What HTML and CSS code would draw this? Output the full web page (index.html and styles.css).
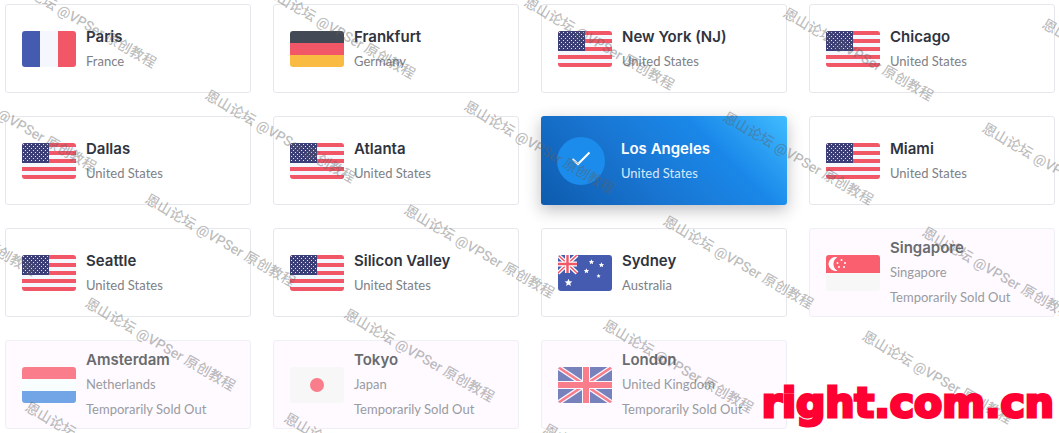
FILE: index.html
```html
<!DOCTYPE html>
<html lang="en">
<head>
<meta charset="utf-8">
<meta name="viewport" content="width=device-width, initial-scale=1">
<title>Server locations</title>
<link rel="stylesheet" href="styles.css">
</head>
<body>
<svg class="defs" aria-hidden="true">
  <defs>
    <pattern id="stars" width="4" height="4" patternUnits="userSpaceOnUse">
      <rect x="1" y="1" width="1" height="1" fill="#e4e5f2"/>
      <rect x="3" y="3" width="1" height="1" fill="#e4e5f2"/>
    </pattern>
    <symbol id="us" viewBox="0 0 54 36">
      <path fill="#f5f7ff" d="M0 0h54v36H0z"/>
      <path stroke="#f25767" stroke-width="4" d="M0 2h54M0 10h54M0 18h54M0 26h54M0 34h54"/>
      <path fill="#3c3f77" d="M0 0h27v20H0z"/>
      <path fill="url(#stars)" d="M0 0h26v19H0z"/>
    </symbol>
    <symbol id="fr" viewBox="0 0 54 36">
      <path fill="#455bb0" d="M0 0h18v36H0z"/><path fill="#f5f7ff" d="M18 0h18v36H18z"/><path fill="#f25767" d="M36 0h18v36H36z"/>
    </symbol>
    <symbol id="de" viewBox="0 0 54 36">
      <path fill="#444a55" d="M0 0h54v12H0z"/><path fill="#f25767" d="M0 12h54v12H0z"/><path fill="#f9bb42" d="M0 24h54v12H0z"/>
    </symbol>
    <symbol id="nl" viewBox="0 0 54 36">
      <path fill="#f97d8b" d="M0 0h54v12H0z"/><path fill="#f8feff" d="M0 12h54v12H0z"/><path fill="#72a5e6" d="M0 24h54v12H0z"/>
    </symbol>
    <symbol id="jp" viewBox="0 0 54 36">
      <path fill="#f7f7f7" d="M0 0h54v36H0z"/><circle cx="27" cy="18" r="7" fill="#f97d8b"/>
    </symbol>
    <symbol id="sg" viewBox="0 0 54 36">
      <path fill="#f7f7f7" d="M0 0h54v36H0z"/><path fill="#f95f6e" d="M0 0h54v18H0z"/>
      <path fill="#fff" d="M11.500 2.300A7 7 0 1 0 11.500 15.700A7.600 7.600 0 0 1 11.500 2.300z"/>
      <g fill="#fff"><circle cx="15.500" cy="5" r="1"/><circle cx="11.500" cy="8" r="1"/><circle cx="19" cy="8" r="1"/><circle cx="13" cy="12" r="1"/><circle cx="18" cy="12" r="1"/></g>
    </symbol>
    <symbol id="au" viewBox="0 0 54 36">
      <path fill="#455bb0" d="M0 0h54v36H0z"/>
      <path stroke="#fff" stroke-width="4" d="M0 0l19 18M19 0L0 18"/>
      <path stroke="#f25767" stroke-width="1.500" d="M0 0l19 18M19 0L0 18"/>
      <path stroke="#fff" stroke-width="5" d="M9.500 0v18M0 9h19"/>
      <path stroke="#f25767" stroke-width="2.400" d="M9.500 0v18M0 9h19"/>
      <path id="star" fill="#fff" d="M10.500 23.700l1.100 2.500 2.700.3-2 1.800.6 2.700-2.400-1.400-2.400 1.400.6-2.700-2-1.800 2.700-.3z"/>
      <use href="#star" transform="translate(26.100 -12.400) scale(.7)"/>
      <use href="#star" transform="translate(36.100 -9.400) scale(.7)"/>
      <use href="#star" transform="translate(21.100 -3.400) scale(.7)"/>
      <use href="#star" transform="translate(34.800 5.800) scale(.55)"/>
    </symbol>
    <symbol id="gb" viewBox="0 0 54 36">
      <path fill="#7782bd" d="M0 0h54v36H0z"/>
      <path stroke="#faf8ff" stroke-width="5" d="M0 0l54 36M54 0L0 36"/>
      <path stroke="#f97d8b" stroke-width="2.500" d="M0 0l54 36M54 0L0 36"/>
      <path stroke="#faf8ff" stroke-width="8" d="M28 0v36M0 18h54"/>
      <path stroke="#f97d8b" stroke-width="6" d="M28 0v36M0 18h54"/>
    </symbol>
    <text id="mark" class="mark" transform="rotate(30)">恩山论坛 @VPSer 原创教程</text>
  </defs>
</svg>

<form class="locations">
  <label class="card"><input class="pick" type="radio" name="location"><svg class="flag" aria-hidden="true"><use href="#fr"/></svg><span class="text"><span class="city">Paris</span><span class="country">France</span></span></label>
  <label class="card"><input class="pick" type="radio" name="location"><svg class="flag" aria-hidden="true"><use href="#de"/></svg><span class="text"><span class="city">Frankfurt</span><span class="country">Germany</span></span></label>
  <label class="card"><input class="pick" type="radio" name="location"><svg class="flag" aria-hidden="true"><use href="#us"/></svg><span class="text"><span class="city">New York (NJ)</span><span class="country">United States</span></span></label>
  <label class="card"><input class="pick" type="radio" name="location"><svg class="flag" aria-hidden="true"><use href="#us"/></svg><span class="text"><span class="city">Chicago</span><span class="country">United States</span></span></label>
  <label class="card"><input class="pick" type="radio" name="location"><svg class="flag" aria-hidden="true"><use href="#us"/></svg><span class="text"><span class="city">Dallas</span><span class="country">United States</span></span></label>
  <label class="card"><input class="pick" type="radio" name="location"><svg class="flag" aria-hidden="true"><use href="#us"/></svg><span class="text"><span class="city">Atlanta</span><span class="country">United States</span></span></label>
  <label class="card selected"><input class="pick" type="radio" name="location" checked><svg class="check" viewBox="0 0 48 48" aria-hidden="true"><circle cx="24" cy="24" r="24" fill="#1b8ceb"/><path d="M15.500 22l5.500 5 11.500-11.500" fill="none" stroke="#fff" stroke-width="2"/></svg><span class="text"><span class="city">Los Angeles</span><span class="country">United States</span></span></label>
  <label class="card"><input class="pick" type="radio" name="location"><svg class="flag" aria-hidden="true"><use href="#us"/></svg><span class="text"><span class="city">Miami</span><span class="country">United States</span></span></label>
  <label class="card"><input class="pick" type="radio" name="location"><svg class="flag" aria-hidden="true"><use href="#us"/></svg><span class="text"><span class="city">Seattle</span><span class="country">United States</span></span></label>
  <label class="card"><input class="pick" type="radio" name="location"><svg class="flag" aria-hidden="true"><use href="#us"/></svg><span class="text"><span class="city">Silicon Valley</span><span class="country">United States</span></span></label>
  <label class="card"><input class="pick" type="radio" name="location"><svg class="flag" aria-hidden="true"><use href="#au"/></svg><span class="text"><span class="city">Sydney</span><span class="country">Australia</span></span></label>
  <label class="card sold-out"><input class="pick" type="radio" name="location" disabled><svg class="flag" aria-hidden="true"><use href="#sg"/></svg><span class="text"><span class="city">Singapore</span><span class="country">Singapore</span><span class="country note">Temporarily Sold Out</span></span></label>
  <label class="card sold-out"><input class="pick" type="radio" name="location" disabled><svg class="flag" aria-hidden="true"><use href="#nl"/></svg><span class="text"><span class="city">Amsterdam</span><span class="country">Netherlands</span><span class="country note">Temporarily Sold Out</span></span></label>
  <label class="card sold-out"><input class="pick" type="radio" name="location" disabled><svg class="flag" aria-hidden="true"><use href="#jp"/></svg><span class="text"><span class="city">Tokyo</span><span class="country">Japan</span><span class="country note">Temporarily Sold Out</span></span></label>
  <label class="card sold-out"><input class="pick" type="radio" name="location" disabled><svg class="flag" aria-hidden="true"><use href="#gb"/></svg><span class="text"><span class="city">London</span><span class="country">United Kingdom</span><span class="country note">Temporarily Sold Out</span></span></label>
</form>

<svg class="watermark" aria-hidden="true">
  <use href="#mark" x="5" y="-17"/><use href="#mark" x="264" y="-6"/><use href="#mark" x="523" y="5"/><use href="#mark" x="782" y="16"/><use href="#mark" x="1041" y="27"/>
  <use href="#mark" x="-55" y="87"/><use href="#mark" x="204" y="98"/><use href="#mark" x="463" y="109"/><use href="#mark" x="722" y="120"/><use href="#mark" x="981" y="131"/>
  <use href="#mark" x="-115" y="191"/><use href="#mark" x="144" y="202"/><use href="#mark" x="403" y="213"/><use href="#mark" x="662" y="224"/><use href="#mark" x="921" y="235"/>
  <use href="#mark" x="84" y="306"/><use href="#mark" x="343" y="317"/><use href="#mark" x="602" y="328"/><use href="#mark" x="861" y="339"/>
  <use href="#mark" x="24" y="410"/><use href="#mark" x="283" y="421"/><use href="#mark" x="542" y="432"/>
</svg>
<div class="site">right.com.cn</div>
</body>
</html>
```
FILE: styles.css
```css
* { box-sizing: border-box; }
body {
  position: relative;
  margin: 0;
  background: #fff;
  font-family: Lato, "Open Sans", sans-serif;
}
.defs { position: absolute; width: 0; height: 0; }
.locations {
  display: grid;
  grid-template-columns: repeat(4, 1fr);
  gap: 23px 22px;
  padding: 4px 4px 4px 5px;
}
.card {
  position: relative;
  display: flex;
  align-items: center;
  gap: 10px;
  min-height: 89px;
  padding: 0 16px;
  border: 1px solid #e6e7ed;
  border-radius: 3px;
  cursor: pointer;
}
.pick { position: absolute; opacity: 0; margin: 0; }
.flag { flex: none; width: 54px; height: 36px; border-radius: 3px; }
.text { display: flex; flex-direction: column; padding-bottom: 1px; }
.city { color: #2f343e; font: 600 15px/26px Inter, sans-serif; }
.country { color: #7e8085; font-size: 13px; line-height: 23px; }
.note { line-height: 26px; }
.selected {
  gap: 16px;
  border: 0;
  background: linear-gradient(45deg, #0d5bae, #1976d2 40%, #1a88e9 70%, #40bcff);
  box-shadow: 0 5px 16px rgba(40, 35, 50, .3);
}
.selected .city { color: #fff; }
.selected .country { color: #d6e9fb; }
.check { flex: none; width: 48px; height: 48px; }
.sold-out { background: #fefaff; border-color: #efeff6; cursor: default; }
.sold-out .city { color: #696b6d; }
.sold-out .country { color: #999ba1; }
.watermark {
  position: absolute;
  inset: 0;
  width: 100%;
  height: 100%;
  overflow: hidden;
  pointer-events: none;
}
.mark {
  fill: rgba(95, 95, 95, .42);
  font: 500 14px Roboto, "Noto Sans CJK SC", sans-serif;
}
.site {
  position: absolute;
  right: 5px;
  bottom: 6px;
  color: #ff0033;
  font: 700 41px/48px "DejaVu Sans", sans-serif;
  -webkit-text-stroke: 3px #ff0033;
}
```
